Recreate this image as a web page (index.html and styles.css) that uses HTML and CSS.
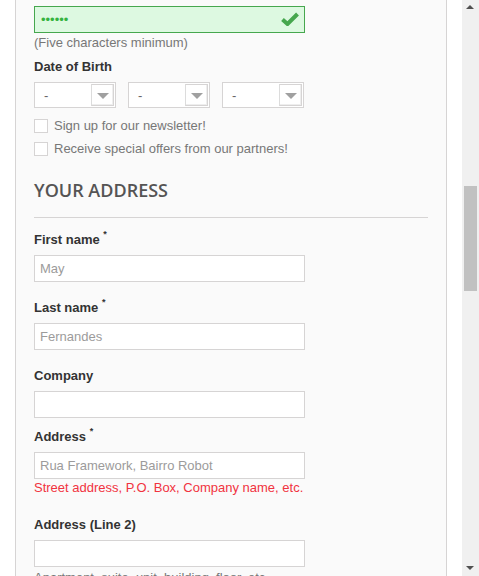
FILE: index.html
```html
<!DOCTYPE html>
<html>
<head>
<meta charset="utf-8">
<link rel="stylesheet" href="styles.css">
</head>
<body>
<div class="page">
  <div class="panel">
    <div class="pw-wrap">
      <input class="field field-ok" type="password" value="123456">
      <svg class="pw-check" width="18" height="14" viewBox="0 0 18 14"><path d="M1.5 7.5 L6.5 12 L16.5 2" fill="none" stroke="#46a74e" stroke-width="4" stroke-linejoin="miter"/></svg>
    </div>
    <div class="hint hint-pw">(Five characters minimum)</div>
    <div class="label label-dob">Date of Birth</div>
    <div class="dob">
      <div class="sel"><span class="sel-text">-</span><span class="sel-btn"><span class="tri"></span></span></div>
      <div class="sel"><span class="sel-text">-</span><span class="sel-btn"><span class="tri"></span></span></div>
      <div class="sel"><span class="sel-text">-</span><span class="sel-btn"><span class="tri"></span></span></div>
    </div>
    <div class="checks">
      <label class="check"><span class="box"></span>Sign up for our newsletter!</label>
      <label class="check"><span class="box"></span>Receive special offers from our partners!</label>
    </div>
    <h3 class="heading">Your address</h3>
    <div class="group g-first">
      <div class="label">First name <sup>*</sup></div>
      <input class="field" type="text" placeholder="May">
    </div>
    <div class="group g-last">
      <div class="label">Last name <sup>*</sup></div>
      <input class="field" type="text" placeholder="Fernandes">
    </div>
    <div class="group g-company">
      <div class="label">Company</div>
      <input class="field" type="text">
    </div>
    <div class="group g-address">
      <div class="label">Address <sup>*</sup></div>
      <input class="field" type="text" placeholder="Rua Framework, Bairro Robot">
      <div class="hint hint-red">Street address, P.O. Box, Company name, etc.</div>
    </div>
    <div class="group g-address2">
      <div class="label">Address (Line 2)</div>
      <input class="field" type="text">
      <div class="hint">Apartment, suite, unit, building, floor, etc.</div>
    </div>
  </div>
</div>
<div class="scrollbar">
  <span class="sb-up"></span>
  <span class="sb-thumb"></span>
  <span class="sb-down"></span>
</div>
</body>
</html>
```
FILE: styles.css
```css
html, body {
  margin: 0;
  padding: 0;
  background: #fff;
  overflow: hidden;
  height: 100%;
}
body {
  font-family: Arial, "Liberation Sans", sans-serif;
  font-size: 13px;
  color: #777;
}
.page {
  width: 462px;
  height: 576px;
  overflow: hidden;
}
.panel {
  margin-left: 15px;
  width: 432px;
  box-sizing: border-box;
  border-left: 1px solid #d6d4d4;
  border-right: 1px solid #d6d4d4;
  background: #fafafa;
  padding: 6px 18px 40px 18px;
  min-height: 700px;
}
.pw-wrap {
  position: relative;
  width: 271px;
}
.field {
  display: block;
  box-sizing: border-box;
  width: 271px;
  height: 27px;
  border: 1px solid #d6d4d4;
  background: #fff;
  padding: 0 5px;
  margin: 0;
  font-family: Arial, "Liberation Sans", sans-serif;
  font-size: 13px;
  color: #9c9b9b;
  outline: none;
}
.field::placeholder {
  color: #9c9b9b;
  opacity: 1;
}
.field-ok {
  background: #ddf9e1;
  border-color: #46a74e;
  color: #35b33f;
  padding-left: 6px;
}
.pw-check {
  position: absolute;
  right: 6px;
  top: 6px;
}
.hint {
  line-height: 18px;
  color: #777;
}
.hint-pw {
  margin-top: 1px;
}
.label {
  font-weight: bold;
  color: #333;
  line-height: 18px;
  padding-top: 1px;
}
.label sup {
  font-size: 9px;
  vertical-align: top;
  line-height: 9px;
  position: relative;
  top: -1px;
}
.label-dob {
  margin-top: 5px;
}
.dob {
  display: flex;
  gap: 12px;
  margin-top: 6px;
}
.sel {
  position: relative;
  box-sizing: border-box;
  width: 82px;
  height: 26px;
  border: 1px solid #d6d4d4;
  background: #fff;
  display: flex;
  align-items: center;
  justify-content: space-between;
  padding: 0 1px 0 9px;
  color: #666;
}
.sel-btn {
  box-sizing: border-box;
  width: 23px;
  height: 22px;
  border: 1px solid #d6d4d4;
  border-left-color: #dcdcdc;
  background: #fff;
  display: flex;
  align-items: center;
  justify-content: center;
  box-shadow: inset -1px -1px 0 #eee;
}
.tri {
  width: 0;
  height: 0;
  border-left: 6px solid transparent;
  border-right: 6px solid transparent;
  border-top: 6px solid #a0a0a0;
  margin-top: 1px;
}
.checks {
  margin-top: 9px;
  display: flex;
  flex-direction: column;
  gap: 5px;
}
.check {
  display: flex;
  align-items: center;
  gap: 6px;
  line-height: 18px;
  color: #777;
}
.box {
  box-sizing: border-box;
  width: 14px;
  height: 14px;
  border: 1px solid #d6d4d4;
  background: #fff;
}
.heading {
  margin: 20px 0 0 0;
  font-family: "Open Sans", sans-serif;
  font-weight: 600;
  font-size: 18px;
  line-height: 24px;
  color: #555454;
  text-transform: uppercase;
  padding-bottom: 15px;
  border-bottom: 1px solid #d6d4d4;
}
.group .label {
  margin-bottom: 6px;
}
.g-first { margin-top: 12px; }
.g-last { margin-top: 16px; }
.g-company { margin-top: 16px; }
.g-address { margin-top: 9px; }
.g-address2 { margin-top: 18px; }
.hint-red {
  color: #f13340;
}
.g-address2 .hint {
  margin-top: 2px;
}
.scrollbar {
  position: fixed;
  top: 0;
  right: 0;
  width: 17px;
  height: 576px;
  background: #f0f0f0;
}
.sb-up, .sb-down {
  position: absolute;
  left: 4px;
  width: 0;
  height: 0;
  border-left: 4px solid transparent;
  border-right: 4px solid transparent;
}
.sb-up {
  top: 5px;
  border-bottom: 4px solid #505050;
}
.sb-down {
  bottom: 6px;
  border-top: 4px solid #505050;
}
.sb-thumb {
  position: absolute;
  left: 2px;
  top: 186px;
  width: 13px;
  height: 105px;
  background: #c1c1c1;
}
```
